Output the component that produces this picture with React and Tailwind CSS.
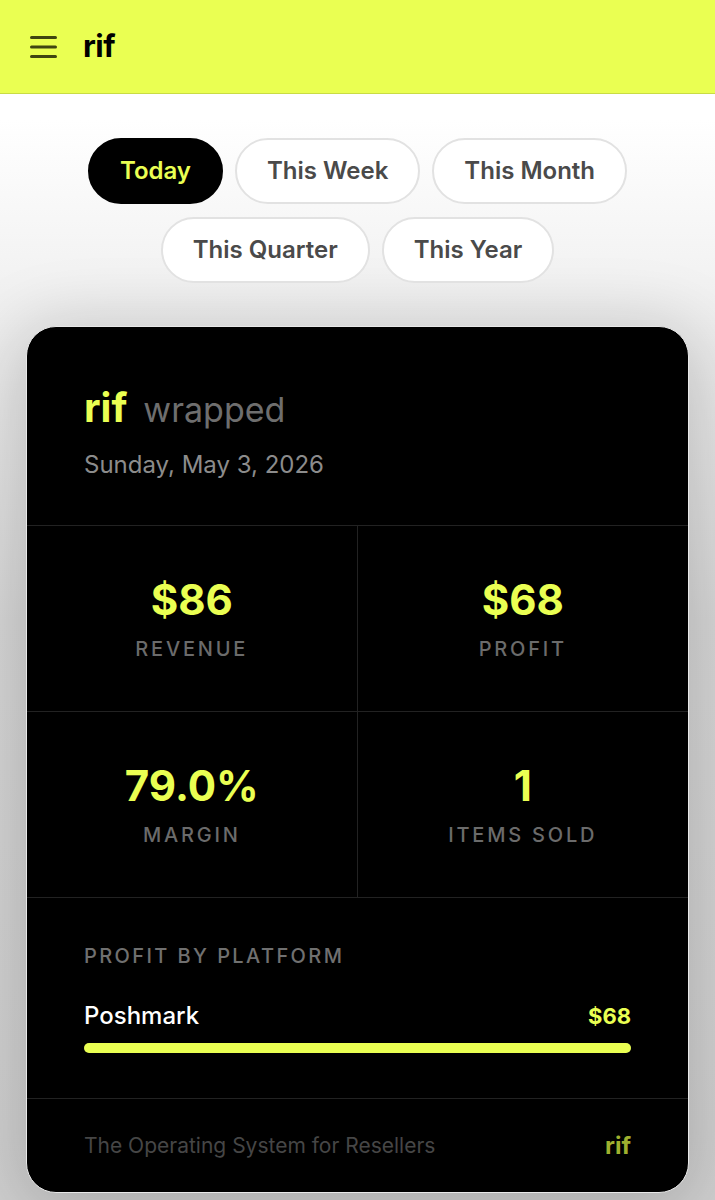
import React, { useState } from "react";

const ranges = [
    ["Today", "This Week", "This Month"],
    ["This Quarter", "This Year"],
];

const stats = [
    { value: "$86", label: "Revenue" },
    { value: "$68", label: "Profit" },
    { value: "79.0%", label: "Margin" },
    { value: "1", label: "Items Sold" },
];

const platforms = [{ name: "Poshmark", profit: 68, pct: 100 }];

export default function App() {
    const [range, setRange] = useState("Today");

    return (
        <div className="min-h-[1200px] bg-[linear-gradient(to_bottom,#ffffff_0px,#ffffff_120px,#eeeeee_330px,#d8d8d8_620px,#d0d0d0_1200px)] font-['Inter',sans-serif]">
            {/* top bar */}
            <header className="h-[94px] bg-[#eaff52] border-b border-[#c9dc45] flex items-center px-[30px] gap-[26px]">
                <svg width="27" height="26" viewBox="0 0 27 26">
                    <rect x="0" y="2" width="27" height="3" rx="1.5" fill="#3f4510" />
                    <rect x="0" y="11.5" width="27" height="3" rx="1.5" fill="#3f4510" />
                    <rect x="0" y="21" width="27" height="3" rx="1.5" fill="#3f4510" />
                </svg>
                <span className="text-[31px] font-bold text-black tracking-[-0.5px] leading-none pb-[3px]">
                    rif
                </span>
            </header>

            {/* range pills */}
            <div className="flex flex-col items-center gap-[13px] pt-[44px]">
                {ranges.map((row, i) => (
                    <div key={i} className="flex gap-[12px]">
                        {row.map((r) => (
                            <button
                                key={r}
                                onClick={() => setRange(r)}
                                className={`h-[66px] px-[30px] rounded-full text-[24px] font-semibold ${
                                    range === r
                                        ? "bg-black text-[#eaff52] border-2 border-black"
                                        : "bg-white text-[#4a4a4a] border-2 border-[#e2e2e2]"
                                }`}
                            >
                                {r}
                            </button>
                        ))}
                    </div>
                ))}
            </div>

            {/* wrapped card */}
            <div className="mx-[26px] mt-[43px] bg-black rounded-[30px] border border-[#e8e8e8] shadow-[0_10px_70px_10px_rgba(0,0,0,0.18)] overflow-hidden">
                <div className="px-[57px] pt-[61px] pb-[42px] border-b border-[#222]">
                    <div className="flex items-baseline gap-[16px]">
                        <span className="text-[40px] font-bold text-[#eaff52] leading-none">rif</span>
                        <span className="text-[34px] text-[#6e6e6e] leading-none">wrapped</span>
                    </div>
                    <div className="mt-[19px] text-[24px] text-[#8c8c8c]">Sunday, May 3, 2026</div>
                </div>

                <div className="grid grid-cols-2">
                    {stats.map((s, i) => (
                        <div
                            key={s.label}
                            className={`h-[186px] flex flex-col items-center justify-center border-b border-[#222] ${
                                i % 2 === 0 ? "border-r" : ""
                            }`}
                        >
                            <div className="text-[42px] font-bold text-[#eaff52] leading-none">{s.value}</div>
                            <div className="mt-[18px] text-[20px] font-medium uppercase tracking-[0.14em] text-[#6b6b6b] leading-none">
                                {s.label}
                            </div>
                        </div>
                    ))}
                </div>

                <div className="px-[57px] pt-[43px] pb-[45px] border-b border-[#222]">
                    <div className="text-[20px] font-medium uppercase tracking-[0.12em] text-[#707070]">
                        Profit by Platform
                    </div>
                    {platforms.map((p) => (
                        <div key={p.name} className="mt-[27px]">
                            <div className="flex items-center justify-between">
                                <span className="text-[24px] font-medium text-white">{p.name}</span>
                                <span className="text-[22px] font-bold text-[#eaff52]">${p.profit}</span>
                            </div>
                            <div className="mt-[9px] h-[10px] rounded-full bg-[#1c1c1c]">
                                <div
                                    className="h-full rounded-full bg-[#eaff52]"
                                    style={{ width: `${p.pct}%` }}
                                />
                            </div>
                        </div>
                    ))}
                </div>

                <div className="h-[93px] px-[57px] flex items-center justify-between">
                    <span className="text-[21px] text-[#464646]">The Operating System for Resellers</span>
                    <span className="text-[24px] font-bold text-[#9fb02f]">rif</span>
                </div>
            </div>
        </div>
    );
}
